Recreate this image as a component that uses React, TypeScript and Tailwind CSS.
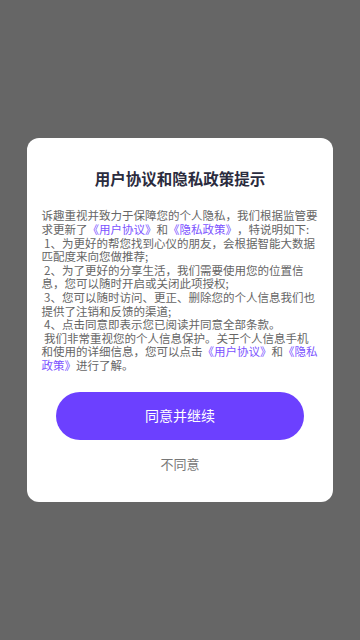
import type { ReactNode } from "react";

const font = { fontFamily: '"Noto Sans CJK SC", "Noto Sans", sans-serif' };

function Link({ children }: { children: ReactNode }) {
  return <span className="text-[#7b52ff]">{children}</span>;
}

export default function App() {
  return (
    <div
      className="flex h-[640px] w-full items-center justify-center bg-[#666666]"
      style={font}
    >
      <div className="flex w-[306px] flex-col items-center rounded-[12px] bg-white pb-[28px] pt-[29px]">
        <h1 className="text-[15.5px] font-bold leading-[22px] text-[#2b2c3e]">
          用户协议和隐私政策提示
        </h1>

        <div className="mt-[20px] w-[277px] whitespace-pre-wrap text-[11.5px] leading-[13.6px] text-[#666666] [text-spacing-trim:space-all]">
          <p>
            诉趣重视并致力于保障您的个人隐私，我们根据监管要求更新了
            <Link>《用户协议》</Link>和<Link>《隐私政策》</Link>，特说明如下:
          </p>
          <p> 1、为更好的帮您找到心仪的朋友，会根据智能大数据匹配度来向您做推荐;</p>
          <p> 2、为了更好的分享生活，我们需要使用您的位置信息，您可以随时开启或关闭此项授权;</p>
          <p> 3、您可以随时访问、更正、删除您的个人信息我们也提供了注销和反馈的渠道;</p>
          <p> 4、点击同意即表示您已阅读并同意全部条款。</p>
          <p>
            {" "}我们非常重视您的个人信息保护。关于个人信息手机和使用的详细信息，您可以点击
            <Link>《用户协议》</Link>和<Link>《隐私政策》</Link>进行了解。
          </p>
        </div>

        <button className="mt-[19px] flex h-[48px] w-[248px] items-center justify-center rounded-full bg-[#6c40ff] text-[14px] text-white">
          同意并继续
        </button>

        <button className="mt-[14px] text-[13px] leading-[20px] text-[#777777]">
          不同意
        </button>
      </div>
    </div>
  );
}
